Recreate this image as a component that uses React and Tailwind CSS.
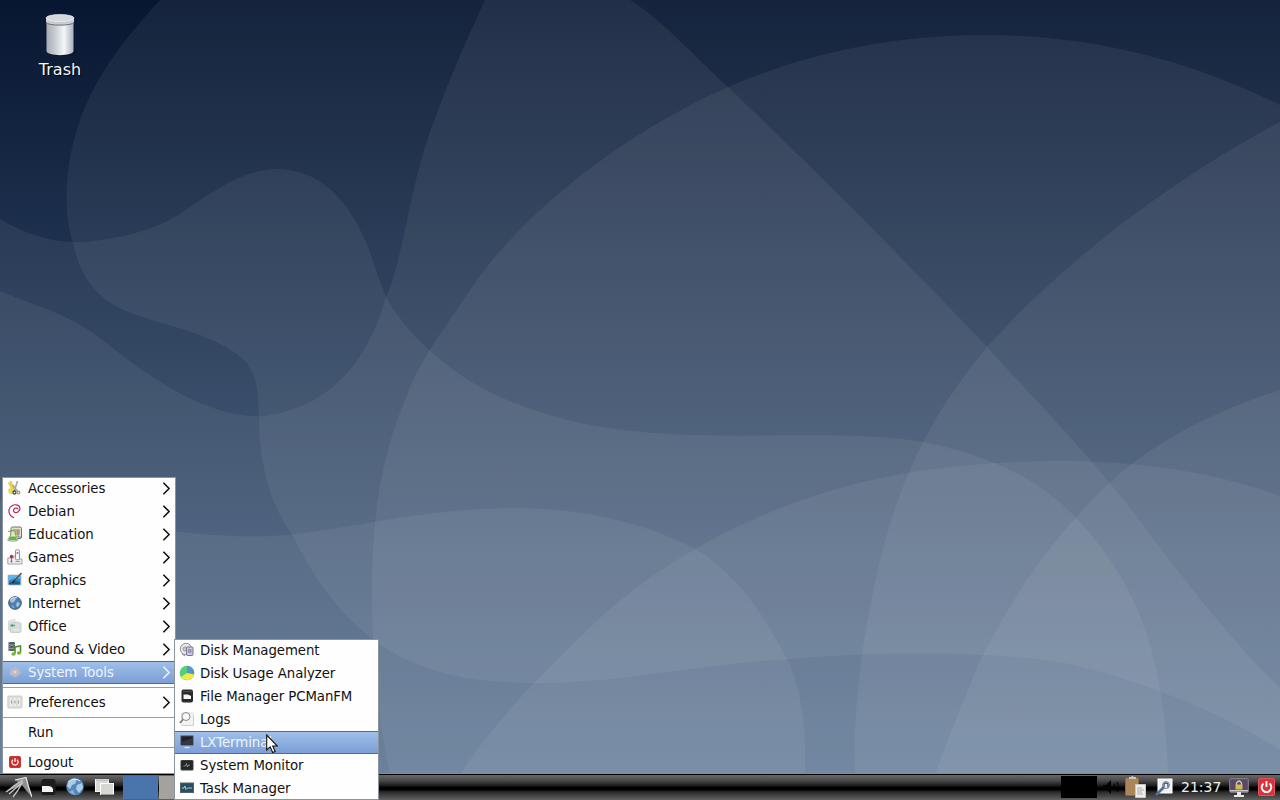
import { ChevronRight } from "lucide-react";

// Overlapping translucent shapes, each one lightens the gradient a bit
const WAVES = [
  "M160 0C125 38 96 75 80 120C66 160 62 205 72 240C82 282 98 304 145 318C185 330 220 338 244 360C262 380 257 405 260 440C264 480 272 505 292 535C322 592 345 620 385 648C425 672 465 683 540 683C630 682 690 665 780 660C860 652 980 650 1060 662C1120 674 1210 705 1280 750V0Z",
  "M485 0C455 65 432 120 420 165C408 205 401 265 385 300C370 350 340 405 265 416C205 420 140 370 100 338C65 312 40 308 0 291V775H1280V688C1230 640 1175 568 1130 508C1085 450 1035 400 987 347C920 275 800 155 728 87C690 52 660 18 630 0Z",
  "M0 219C25 234 55 244 85 242C120 238 150 232 180 214C215 190 245 168 280 169C325 171 350 206 365 240C377 268 378 285 395 312C430 358 475 395 560 418C680 450 820 425 923 442C990 455 1040 480 1076 518C1145 590 1165 670 1168 775H0Z",
  "M1280 105C1200 65 1100 34 980 35C890 36 810 52 728 87C620 135 520 215 470 290C440 335 420 360 405 400C380 460 372 520 372 590C372 660 378 715 390 775H1280Z",
  "M1280 122C1170 180 1060 265 987 347C930 415 900 480 880 560C862 640 853 700 855 775H1280Z",
  "M1280 390C1210 412 1150 445 1107 485C1050 540 1010 600 978 665C958 715 945 745 935 775H1280Z",
  "M1280 496C1210 470 1130 460 1050 461C930 463 840 480 750 521C690 548 645 578 600 618C545 670 495 720 460 775H1280Z",
  "M0 500C90 520 200 542 290 535C370 525 430 508 520 508C600 509 660 530 697 550C740 575 770 625 790 665C804 700 806 735 805 775H0Z",
];

function Wallpaper() {
  return (
    <svg className="absolute inset-0 h-[800px] w-[1280px]" viewBox="0 0 1280 800">
      <defs>
        <linearGradient id="sky" x1="0" y1="0" x2="0" y2="1">
          <stop offset="0" stopColor="#071631" />
          <stop offset="0.5" stopColor="#2c4260" />
          <stop offset="1" stopColor="#516d8e" />
        </linearGradient>
      </defs>
      <rect width="1280" height="800" fill="url(#sky)" />
      {WAVES.map((d, i) => (
        <path key={i} d={d} fill="#fff" fillOpacity="0.06" />
      ))}
    </svg>
  );
}

function Icon({ children }) {
  return (
    <svg className="h-4 w-4 shrink-0" viewBox="0 0 16 16" fill="none">
      {children}
    </svg>
  );
}

const icons = {
  accessories: (
    <Icon>
      <path d="M1.500 3L4 1L8 10L6 12Z" fill="#ecd93e" stroke="#c2ac2c" strokeWidth=".5" />
      <path d="M1 9L4 8L6 14H2Z" fill="#e9d95b" />
      <path d="M10.500 1L7.500 10.500M5.500 5L10.500 11" stroke="#a3a3a0" strokeWidth="1.500" />
      <circle cx="7.500" cy="12.500" r="1.500" stroke="#4b4630" strokeWidth="1.300" />
      <circle cx="11.500" cy="12.500" r="1.300" stroke="#b39a4f" strokeWidth="1.200" />
    </Icon>
  ),
  debian: (
    <Icon>
      <path
        d="M9.300 9.500C7.300 9.800 6.200 8.300 6.700 6.600C7.300 4.800 9.800 4.500 11 6M11.300 8.500C13.800 6.500 13.500 3.200 10.500 2.100C6.500 .9 2.500 3.300 2 7C1.700 10 3.200 13 6.500 14.600M11.300 8.500C10.700 9.400 10 9.600 9.300 9.500"
        stroke="#bd2459"
        strokeWidth="1.200"
        strokeLinecap="round"
      />
    </Icon>
  ),
  education: (
    <Icon>
      <rect x="4" y="1" width="10.500" height="11.500" rx="1.500" fill="#e5e2c9" stroke="#77735d" />
      <rect x="6" y="3" width="7" height="6" rx="1" fill="#bdb276" />
      <path d="M11 4V11H14" stroke="#7b85a2" />
      <path d="M4 5H8V8L11 13Q11 15 9 15H3Q0 15 1 13L4 9Z" fill="#dceccd" stroke="#71845f" strokeWidth=".7" />
      <path d="M2.500 10.500H9L10 14H2Z" fill="#68b83d" />
      <path d="M1 5.500L7 4" stroke="#77a64a" />
    </Icon>
  ),
  games: (
    <Icon>
      <path d="M.8 9H6.500V7H9V10H15V15H.8Z" fill="#efeeee" stroke="#999" strokeWidth=".9" />
      <rect x="8.500" y=".8" width="4" height="10" rx="1" fill="#f6f6f6" stroke="#888" strokeWidth=".9" />
      <path d="M4.500 6V12" stroke="#777" />
      <circle cx="4.500" cy="7.500" r="1.700" fill="#b52d4d" />
      <circle cx="10.500" cy="4" r="1" fill="#bb5269" />
      <circle cx="4.500" cy="12.500" r="1" fill="#b54b60" />
      <path d="M8.500 12.500H13" stroke="#c58592" />
    </Icon>
  ),
  graphics: (
    <Icon>
      <rect x="1" y="3" width="13" height="10" fill="#2d87c7" stroke="#c7cdd0" />
      <path d="M1.500 3.500H13.500V7Q7 5 1.500 9Z" fill="#62b2e5" />
      <path d="M2 11Q6 8 13 10V12.500H2Z" fill="#235b83" />
      <path d="M14.500 1L7 9" stroke="#555" strokeWidth="1.500" />
      <path d="M8.500 7.500L4.500 10.500L6.500 11Z" fill="#1b2225" />
    </Icon>
  ),
  internet: (
    <Icon>
      <circle cx="8" cy="8" r="6.300" fill="#4f81b0" stroke="#42596e" />
      <path d="M4 3Q8 1 9 4L7 7L5 8L3 6ZM10 7L13 8L11 12L9 11ZM5 10L7 12L6 13.500Z" fill="#a6c6de" />
      <path d="M3.500 4.500Q6 2 10 2.500" stroke="#d0e2ee" />
    </Icon>
  ),
  office: (
    <Icon>
      <path d="M1.500 3L8 1.500V12H1.500Z" fill="#e8ece9" stroke="#c7ccc9" strokeWidth=".7" />
      <rect x="3" y="4.500" width="11" height="10" rx="1.500" fill="#d9dcda" stroke="#bdc0be" strokeWidth=".7" />
      <path d="M3.500 7.500H8M5 6V9" stroke="#58a481" strokeWidth="1.300" />
      <path d="M9 3.500L12 3L13 5M6 12H12" stroke="#eee" />
    </Icon>
  ),
  sound: (
    <Icon>
      <path d="M1.500 1H8V10H1.500Z" fill="#505a62" />
      <path d="M2.300 1V10M7.200 1V10" stroke="#b9c0c5" strokeWidth=".8" strokeDasharray="1 1" />
      <path d="M3 4H6.500M3 7.500H6.500" stroke="#8999a6" strokeWidth="1.300" />
      <path d="M8 12.500V6L13.500 5V11.500" stroke="#548d2c" strokeWidth="1.600" />
      <ellipse cx="6.500" cy="13" rx="2.200" ry="1.700" fill="#75b53c" />
      <ellipse cx="12" cy="12" rx="2.200" ry="1.700" fill="#75b53c" />
    </Icon>
  ),
  system: (
    <Icon>
      <path d="M8 2.500L10 4.500H12L12.500 7L14 8.500L12 10.500L10 12.500L8 13.500L6 12L3.500 11L2.500 8.500L4 6.500V4.500H6.500Z" fill="#b9bdc9" />
      <circle cx="8" cy="8" r="2.500" fill="#d9d1d4" stroke="#c1a3a6" strokeWidth=".8" />
    </Icon>
  ),
  preferences: (
    <Icon>
      <rect x=".8" y="2" width="14.200" height="12" rx="1" fill="#dededd" stroke="#c5c5c3" strokeWidth=".8" />
      <path d="M4 4V12M8 4V12M12 4V12" stroke="#f4f4f4" strokeWidth="1.200" />
      <path d="M4.500 6.500V9.500M8 6.500V9.500M11.500 6.500V9.500" stroke="#a3a3a1" strokeWidth="1.100" />
    </Icon>
  ),
  logout: (
    <Icon>
      <rect x="2.500" y="2.500" width="11" height="11" rx="1" fill="#cf2b2e" stroke="#c2393c" />
      <path d="M6 5.700A3.100 3.100 0 1 0 10 5.700M8 4V8" stroke="#fff" strokeWidth="1.200" />
    </Icon>
  ),
  disks: (
    <Icon>
      <circle cx="7" cy="7" r="5.700" fill="#e8e8ea" stroke="#8f9095" />
      <circle cx="6" cy="7" r="2" fill="#c8c9ce" stroke="#9999a2" />
      <rect x="7.500" y="5" width="6.500" height="8.500" rx="1" fill="#c9c9df" stroke="#77758f" />
      <path d="M9 8H12.500M9 10H12.500" stroke="#68688d" />
      <path d="M3 12L6 14" stroke="#888" />
    </Icon>
  ),
  usage: (
    <Icon>
      <circle cx="8" cy="8" r="7.300" fill="#4fd178" />
      <path d="M8 .7A7.300 7.300 0 0 1 15 9.500L8 8Z" fill="#5c8fd6" />
      <path d="M15 9.500A7.300 7.300 0 0 1 2 12L8 8Z" fill="#f2ea45" />
    </Icon>
  ),
  pcmanfm: (
    <Icon>
      <rect x="2.500" y="1.500" width="11.500" height="13" rx="2" fill="#2b2b2b" />
      <path d="M4.500 6.500H9L12 8V11H4.500Z" fill="#f5f5f5" />
      <path d="M4 3.500H12.500" stroke="#4f4f4f" />
    </Icon>
  ),
  logs: (
    <Icon>
      <rect x="2.500" y="2" width="12" height="12.500" rx="1" fill="#f3f3f3" stroke="#ddd" />
      <path d="M3 14.500H14.500V5" stroke="#cfcfcf" />
      <circle cx="7" cy="5.500" r="4" fill="#f7fafc" stroke="#888" />
      <path d="M4 8.500L.8 12" stroke="#777" strokeWidth="1.600" />
    </Icon>
  ),
  terminal: (
    <Icon>
      <rect x="2" y="2" width="12" height="9" fill="#202228" stroke="#454a55" />
      <path d="M2.500 8L13.500 4V10.500H2.500Z" fill="#353840" />
      <path d="M5.500 13.500H10.500" stroke="#d9dee8" strokeWidth="1.500" />
    </Icon>
  ),
  monitor: (
    <Icon>
      <rect x="2" y="3.500" width="12" height="9.500" rx=".5" fill="#252726" stroke="#3b3d3c" />
      <path d="M4.500 9H6.500L7.500 6.500L8.500 10L9.500 8H11" stroke="#9ba19d" strokeWidth=".8" />
    </Icon>
  ),
  tasks: (
    <Icon>
      <rect x="1.500" y="3" width="13" height="9.500" fill="#2b4d60" stroke="#50626c" />
      <path d="M3 8H5L6 6L7 9.500L8.500 8H13" stroke="#a0cbd6" />
    </Icon>
  ),
};

const MAIN_MENU = [
  { label: "Accessories", icon: "accessories", sub: true },
  { label: "Debian", icon: "debian", sub: true },
  { label: "Education", icon: "education", sub: true },
  { label: "Games", icon: "games", sub: true },
  { label: "Graphics", icon: "graphics", sub: true },
  { label: "Internet", icon: "internet", sub: true },
  { label: "Office", icon: "office", sub: true },
  { label: "Sound & Video", icon: "sound", sub: true },
  { label: "System Tools", icon: "system", sub: true, active: true },
  { separator: true },
  { label: "Preferences", icon: "preferences", sub: true },
  { separator: true },
  { label: "Run" },
  { separator: true },
  { label: "Logout", icon: "logout" },
];

const SYSTEM_TOOLS = [
  { label: "Disk Management", icon: "disks" },
  { label: "Disk Usage Analyzer", icon: "usage" },
  { label: "File Manager PCManFM", icon: "pcmanfm" },
  { label: "Logs", icon: "logs" },
  { label: "LXTerminal", icon: "terminal", active: true },
  { label: "System Monitor", icon: "monitor" },
  { label: "Task Manager", icon: "tasks" },
];

function MenuItem({ item }) {
  if (item.separator) {
    return (
      <div className="h-[7px] pt-[3px]">
        <div className="h-px bg-[#969da3]" />
      </div>
    );
  }
  return (
    <div
      className={
        item.active
          ? "flex h-[23px] items-center border-y border-[#4d6c99] bg-linear-to-b from-[#9fbfe8] to-[#7c9fd6] pr-[3px] pl-[5px] text-[#eef4fc]"
          : "flex h-[23px] items-center pr-[3px] pl-[5px] text-[#111]"
      }
    >
      <div className="w-[21px] shrink-0 pb-px">{item.icon && icons[item.icon]}</div>
      <span className="flex-1 whitespace-nowrap">{item.label}</span>
      {item.sub && <ChevronRight className="-mr-[4px] mb-px h-[21px] w-[21px]" strokeWidth={1.900} />}
    </div>
  );
}

function Menu({ items, className }) {
  return (
    <div
      className={
        "absolute bg-[#fefefe] text-[13.3px] tracking-[-0.06px] outline -outline-offset-1 outline-[#8b939c] " + className
      }
    >
      {items.map((item, i) => (
        <MenuItem key={i} item={item} />
      ))}
    </div>
  );
}

function Trash() {
  return (
    <div className="relative flex w-[120px] flex-col items-center pt-[13px]">
      <svg className="h-[46px] w-[40px]" viewBox="0 0 40 46">
        <defs>
          <linearGradient id="can">
            <stop offset="0" stopColor="#a9adb3" />
            <stop offset="0.3" stopColor="#c5cbd0" />
            <stop offset="0.65" stopColor="#f3f7f9" />
            <stop offset="1" stopColor="#a9b1bb" />
          </linearGradient>
        </defs>
        <ellipse cx="22" cy="39" rx="15" ry="4" fill="#06101f" opacity=".5" />
        <path d="M6.500 8V38C6.500 43.500 33.500 43.500 33.500 38V8Z" fill="url(#can)" />
        <path d="M6 5V9C7 13 33 13 34 9V5Z" fill="#c9cdd3" />
        <path d="M6 9.500C8 13 32 13 34 9.500" fill="none" stroke="#68727e" />
        <ellipse cx="20" cy="5" rx="14" ry="3.500" fill="#d5d8df" stroke="#eef0f3" strokeWidth=".7" />
      </svg>
      <span className="text-[16px] leading-[22px] text-[#f2f5fa] [text-shadow:1px_1px_1px_#000]">Trash</span>
    </div>
  );
}

function LxdeLogo() {
  return (
    <svg className="h-6 w-[28px]" viewBox="0 0 28 24" fill="none">
      <path d="M2 17Q10 9 14 7L11 4.500L22 2Q24 10 28 22Q22 16 18 10" fill="#8f8f8f" />
      <path d="M2 17L19 5M5 19L19 7M9 22Q14 16 18 8" stroke="#c4c4c4" strokeWidth="1.400" />
      <path d="M11 5L22 2.500Q24 11 28 22" stroke="#e4e4e4" strokeWidth="1.200" />
    </svg>
  );
}

function Panel() {
  return (
    <div className="relative h-[27px] border-t border-[#858b8f] bg-black pt-px">
      <div className="flex h-[25px] items-center bg-[linear-gradient(#686868,#4a4a4a_22%,#1c1c1c_42%,#000_50%,#000_58%,#2a2a2a_68%,#626262)] pb-px">
        <div className="flex w-[123px] items-center gap-[9px] pl-1">
          <LxdeLogo />
          <svg className="h-4 w-[15px]" viewBox="0 0 15 16">
            <rect width="14" height="16" x=".5" rx="2.500" fill="#1c1c1c" />
            <path d="M1 7H7Q11 7 12 10V13H1Z" fill="#f2f2f0" />
          </svg>
          <svg className="h-5 w-5" viewBox="0 0 20 20">
            <circle cx="10" cy="9.500" r="8.800" fill="#5788b9" />
            <path d="M3 6Q7 0 12 2L10 7L7 8L5 12L2 9ZM12 8L17 6L18 11L14 16L11 12Z" fill="#abcde7" />
            <path d="M4 15L8 13L10 18" fill="#8fb5d6" />
            <path d="M3 5Q9 0 15 4" fill="none" stroke="#dcebf5" />
          </svg>
          <svg className="h-5 w-[22px]" viewBox="0 0 22 20">
            <rect x="1.500" y="2.500" width="13" height="12" fill="#d8dad7" stroke="#f6f6f6" />
            <path d="M2 3H15" stroke="#a9b0b5" />
            <rect x="6.500" y="6.500" width="13" height="11" fill="#d5d7d3" stroke="#fff" />
            <path d="M7 17.500H20" stroke="#999" />
          </svg>
        </div>
        <div className="flex h-6 pt-px">
          <div className="w-[35px] bg-[#4a75ac]" />
          <div className="ml-px w-[35px] bg-[#a3a29e]" />
        </div>
        <div className="flex-1" />
        <div className="h-[22px] w-9 bg-black" />
        <svg className="ml-[6px] h-5 w-[18px]" viewBox="0 0 18 20">
          <path d="M0 8H3L8 3V17L3 12H0Z" fill="#030303" />
          <path d="M11 7Q13 10 11 13M14 5Q17 10 14 15" fill="none" stroke="#050505" strokeWidth="1.300" />
        </svg>
        <svg className="ml-[4px] h-[22px] w-[22px]" viewBox="0 0 22 22">
          <rect x=".5" y="2" width="13" height="17.500" rx="1" fill="#ac8559" stroke="#8b6842" />
          <path d="M4 3V1H6Q7 -1 9 1H11V3Z" fill="#c9c6bc" />
          <path d="M10.500 8.500H20.500V21.500H10.500Z" fill="#eeeeec" stroke="#c8c8c5" />
          <path d="M12 12H17M12 14H19M12 16H17M12 18H18" stroke="#999" strokeWidth=".8" />
        </svg>
        <svg className="ml-[8px] h-[18px] w-[18px]" viewBox="0 0 18 18">
          <rect x="3" y="1" width="14" height="14" fill="#eef1f3" stroke="#fff" />
          <path d="M9 9V6Q11 4 13 6V10" fill="none" stroke="#40566a" strokeWidth="1.300" />
          <circle cx="11" cy="7" r="3.500" fill="none" stroke="#718ba1" />
          <path d="M9 9L1 17" stroke="#4f7196" strokeWidth="2.600" />
        </svg>
        <span className="ml-[8px] w-[42px] pb-px text-[14px] leading-5 text-[#f0f0f0]">21:37</span>
        <svg className="ml-1.5 h-[21px] w-5" viewBox="0 0 20 21">
          <rect x=".7" y="1.700" width="18.600" height="13.600" rx="1" fill="#594967" stroke="#8b8791" />
          <path d="M1 13V14.500H19V13Z" fill="#c8c8c8" />
          <path d="M7.500 8V6Q10 2 12.500 6V8" fill="none" stroke="#ccc9ba" strokeWidth="1.300" />
          <rect x="6.500" y="7.500" width="7" height="5" fill="#d6b856" />
          <path d="M8 15H12V18H15V20H5V18H8Z" fill="#e6e6e6" />
        </svg>
        <svg className="mr-[5px] ml-[9px] h-[18px] w-[17px]" viewBox="0 0 17 18">
          <rect x=".5" y=".5" width="16" height="17" rx="1.500" fill="#d8333b" stroke="#e4545a" />
          <path d="M5.500 5.500A4.800 4.800 0 1 0 11.500 5.500M8.500 3V9" fill="none" stroke="#fff" strokeWidth="1.900" />
        </svg>
      </div>
    </div>
  );
}

function Cursor() {
  return (
    <svg className="absolute top-[734px] left-[266px] h-[20px] w-3" viewBox="0 0 12 20">
      <path d="M.7 1V16L4.200 12.800L6.700 18.500L9.200 17.400L6.700 12H11.300Z" fill="#fff" stroke="#111" strokeWidth="1.100" />
    </svg>
  );
}

export default function App() {
  return (
    <div className="relative flex h-[800px] w-[1280px] flex-col overflow-hidden bg-[#061531] font-['DejaVu_Sans',sans-serif]">
      <Wallpaper />
      <main className="flex-1">
        <Trash />
      </main>
      <Panel />
      <Menu items={MAIN_MENU} className="top-[477px] left-[2px] w-[174px]" />
      <Menu items={SYSTEM_TOOLS} className="top-[639px] left-[174px] w-[205px]" />
      <Cursor />
    </div>
  );
}
